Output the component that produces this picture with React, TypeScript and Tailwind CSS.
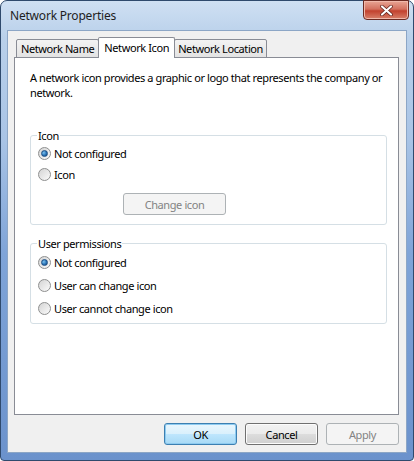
import type { ReactNode } from "react";

const font = { fontFamily: '"Noto Sans", "Open Sans", sans-serif' };

function Radio({ label, checked }: { label: string; checked?: boolean }) {
  return (
    <div className="flex items-center gap-[3px]">
      <span className="flex h-[13px] w-[13px] items-center justify-center rounded-full border border-[#8e8f8f] bg-gradient-to-br from-[#d4d4d4] to-[#fbfbfb]">
        {checked && (
          <span className="h-[7px] w-[7px] rounded-full border border-[#1d4f84] bg-[radial-gradient(circle_at_35%_35%,#7cc2ee,#2a74b8_55%,#123f73)]" />
        )}
      </span>
      <span>{label}</span>
    </div>
  );
}

function Group({ title, children, className }: { title: string; children: ReactNode; className?: string }) {
  return (
    <fieldset className={`rounded-[3px] border border-[#d5dfe5] pl-[6px] ${className ?? ""}`}>
      <legend className="px-[1px] leading-[15px]">{title}</legend>
      {children}
    </fieldset>
  );
}

function Button({ children, primary, disabled, className }: { children: ReactNode; primary?: boolean; disabled?: boolean; className?: string }) {
  const look = disabled
    ? "border-[#adb2b5] bg-[#f4f4f4] text-[#838383]"
    : primary
      ? "border-[#3c7fb1] bg-[linear-gradient(#eaf6fd_0%,#d9f0fc_50%,#bee6fd_51%,#a7d9f5_100%)] shadow-[inset_0_0_0_1px_#8ecbf0]"
      : "border-[#707070] bg-[linear-gradient(#f2f2f2_0%,#ebebeb_50%,#dddddd_51%,#cfcfcf_100%)] shadow-[inset_0_0_0_1px_#fcfcfc]";
  return (
    <div className={`flex h-[22px] w-[73px] items-center justify-center rounded-[3px] border ${look} ${className ?? ""}`}>
      {children}
    </div>
  );
}

export default function App() {
  return (
    <div className="h-[461px] w-[414px] bg-white text-[11px] leading-[15px] tracking-[-0.4px] text-black" style={font}>
      <div className="flex h-[461px] w-[414px] flex-col rounded-t-[7px] rounded-b-[4px] border border-[#2f4a6d] bg-[linear-gradient(#cfe0f3_0%,#b9d0ea_8%,#a9c4e6_30%,#7fa4d8_55%,#6b92cc_100%)] px-[6px] pb-[7px]">
        {/* title bar */}
        <div className="flex h-[29px] shrink-0 items-start justify-between">
          <span className="pl-[3px] pt-[7px] text-[12px] tracking-[-0.2px] text-[#1e1e1e]">Network Properties</span>
          <div className="-mr-[2px] -mt-px flex h-[20px] w-[46px] items-center justify-center rounded-b-[4px] border border-[#6b2a22] bg-[linear-gradient(#e8a595_0%,#d3715f_45%,#c2412e_55%,#d8806a_100%)] shadow-[inset_0_0_0_1px_#f0b8aa]">
            <svg width="13" height="11" viewBox="0 0 13 11">
              <path d="M2 1.5 L11 9.5 M11 1.5 L2 9.5" stroke="#5a1d16" strokeWidth="3.6" strokeLinecap="round" />
              <path d="M2 1.5 L11 9.5 M11 1.5 L2 9.5" stroke="#ffffff" strokeWidth="2.2" strokeLinecap="round" />
            </svg>
          </div>
        </div>

        {/* client area */}
        <div className="flex flex-1 flex-col border border-[#8ca6c6] bg-[#f0f0f0] pl-[6px] pr-[7px] pt-[6px]">
          {/* tabs */}
          <div className="relative z-10 -mb-px flex h-[21px] items-end pl-[2px]">
            <div className="flex h-[19px] items-center rounded-t-[2px] border border-[#898c95] bg-[linear-gradient(#f3f3f3,#e3e3e3)] px-[4px]">
              Network Name
            </div>
            <div className="relative z-10 -mx-[1px] flex h-[21px] items-start rounded-t-[2px] border border-b-0 border-[#898c95] bg-white px-[5px] pt-[2px]">
              Network Icon
            </div>
            <div className="flex h-[19px] items-center rounded-t-[2px] border border-[#898c95] bg-[linear-gradient(#f3f3f3,#e3e3e3)] px-[3px]">
              Network Location
            </div>
          </div>

          {/* panel */}
          <div className="flex h-[358px] flex-col border border-[#898c95] bg-white pl-[15px] pr-[11px] pt-[12px]">
            <p className="whitespace-nowrap">
              A network icon provides a graphic or logo that represents the company or
              <br />
              network.
            </p>

            <Group title="Icon" className="mt-[28px] pb-[9px]">
              <div className="flex h-[21px] items-center pl-[1px]">
                <Radio label="Not configured" checked />
              </div>
              <div className="flex h-[21px] items-center pl-[1px]">
                <Radio label="Icon" />
              </div>
              <Button disabled className="ml-[86px] mt-[8px] h-[21px] w-[103px]">
                Change icon
              </Button>
            </Group>

            <Group title="User permissions" className="mt-[11px] pb-[3px]">
              <div className="flex h-[23px] items-center pl-[1px]">
                <Radio label="Not configured" checked />
              </div>
              <div className="flex h-[23px] items-center pl-[1px]">
                <Radio label="User can change icon" />
              </div>
              <div className="flex h-[23px] items-center pl-[1px]">
                <Radio label="User cannot change icon" />
              </div>
            </Group>
          </div>

          {/* dialog buttons */}
          <div className="mt-[8px] flex justify-end gap-[8px]">
            <Button primary>OK</Button>
            <Button>Cancel</Button>
            <Button disabled>Apply</Button>
          </div>
        </div>
      </div>
    </div>
  );
}
